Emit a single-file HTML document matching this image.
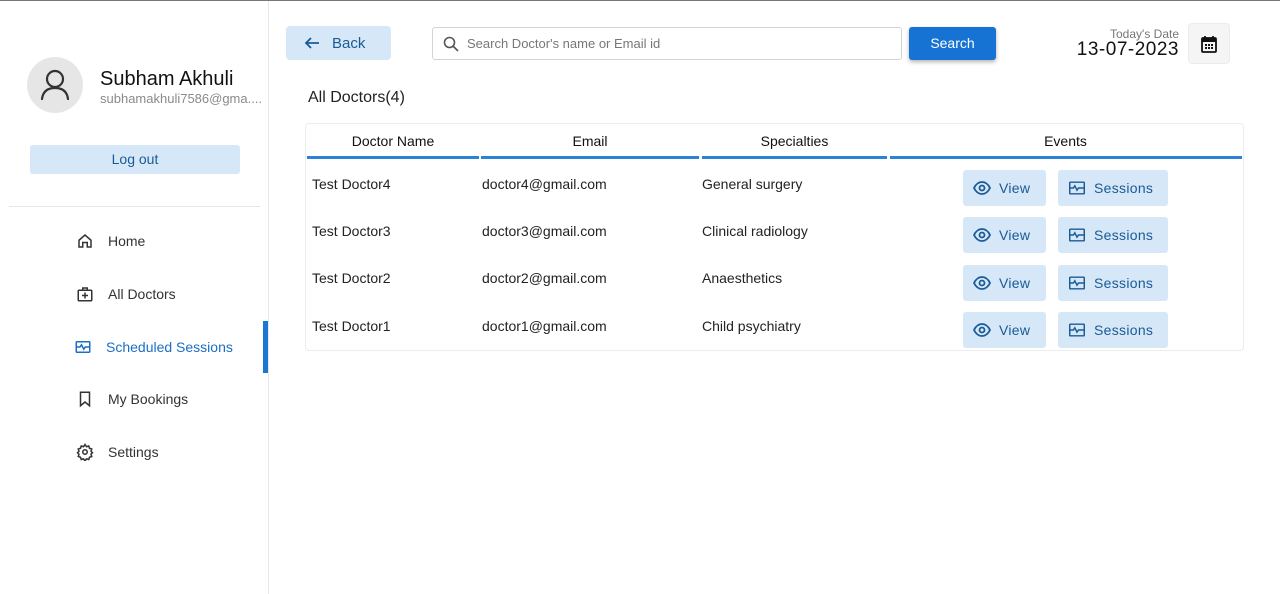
<!DOCTYPE html>
<html><head><meta charset="utf-8"><style>
*{box-sizing:border-box;margin:0;padding:0}
body{width:1280px;height:594px;background:#fff;font-family:"Liberation Sans",sans-serif;position:relative;overflow:hidden;color:#222}
.abs{position:absolute}
.topline{left:0;top:0;width:1280px;height:1px;background:#777}
.side{left:0;top:1px;width:269px;height:593px;border-right:1px solid #e6e6e6}
.avatar{left:27px;top:57px;width:56px;height:56px;border-radius:50%;background:#e6e6e6}
.name{left:100px;top:68px;font-size:20px;color:#111}
.mail{left:100px;top:91px;font-size:13px;color:#8a8a8a}
.logout{left:30px;top:145px;width:210px;height:29px;background:#d6e8f8;border-radius:3px;color:#1a5a96;font-size:14px;text-align:center;line-height:29px}
.hr{left:9px;top:206px;width:251px;height:1px;background:#e6e6e6}
.nav{left:76px;font-size:14px;color:#333;display:flex;align-items:center;gap:14px}
.nav svg{width:18px;height:18px}
.ind{left:263px;top:321px;width:5px;height:52px;background:#1976d2}
.back{left:286px;top:26px;width:105px;height:34px;background:#d6e8f8;border-radius:4px;color:#1a5a96;font-size:15px;display:flex;align-items:center;padding-left:18px;gap:12px}
.search{left:432px;top:27px;width:470px;height:33px;border:1px solid #d4d4d4;border-radius:3px;display:flex;align-items:center;padding-left:10px;gap:8px;font-size:13px;color:#777}
.sbtn{left:909px;top:27px;width:87px;height:33px;background:#1673d4;border-radius:3px;color:#fff;font-size:14px;text-align:center;line-height:33px;box-shadow:0 2px 4px rgba(0,0,0,.3)}
.tdl{left:1060px;top:27px;width:119px;text-align:right;font-size:12px;color:#777}
.tdd{left:1050px;top:39px;width:129px;text-align:right;font-size:19px;color:#111;letter-spacing:.5px}
.cal{left:1188px;top:23px;width:42px;height:41px;background:#f5f5f5;border:1px solid #ececec;border-radius:4px;display:flex;align-items:center;justify-content:center}
.title{left:308px;top:89px;font-size:16px;color:#222}
.table{left:305px;top:123px;width:939px;height:228px;border:1px solid #ececec;border-radius:4px}
.th{top:133px;font-size:14px;color:#111;text-align:center}
.bl{top:156px;height:3px;background:#2c83d6}
.td{font-size:14px;color:#222}
.btn{height:36px;background:#d6e8f8;border-radius:3px;color:#1a5a96;font-size:14px;display:flex;align-items:center;gap:8px;padding-left:10px;letter-spacing:.3px}
</style></head><body>
<div class="abs topline"></div>
<div class="abs side"></div>
<div class="abs avatar"><svg width="56" height="56" viewBox="0 0 56 56"><circle cx="28" cy="22" r="8" fill="none" stroke="#333" stroke-width="2.2"/><path d="M15 42c1-8 6-11 13-11s12 3 13 11" fill="none" stroke="#333" stroke-width="2.2" stroke-linecap="round"/></svg></div>
<div class="abs name">Subham Akhuli</div>
<div class="abs mail">subhamakhuli7586@gma....</div>
<div class="abs logout">Log out</div>
<div class="abs hr"></div>
<div class="abs nav" style="top:232px"><svg viewBox="0 0 24 24" fill="none" stroke="#333" stroke-width="2"><path d="M4 11l8-7 8 7v9h-5v-6h-6v6H4z"/></svg>Home</div>
<div class="abs nav" style="top:285px"><svg viewBox="0 0 24 24" fill="none" stroke="#333" stroke-width="2"><rect x="3" y="7" width="18" height="14" rx="1"/><path d="M9 7V4h6v3M12 10v8M8 14h8"/></svg>All Doctors</div>
<div class="abs nav" style="top:338px;left:74px;color:#1a6fc4"><svg viewBox="0 0 24 24" fill="none" stroke="#1a6fc4" stroke-width="2"><rect x="3" y="5" width="18" height="14" rx="1"/><path d="M3 12h5l2-3 3 6 2-3h6"/></svg>Scheduled Sessions</div>
<div class="abs nav" style="top:390px"><svg viewBox="0 0 24 24" fill="none" stroke="#333" stroke-width="2"><path d="M6 3h12v18l-6-5-6 5z"/></svg>My Bookings</div>
<div class="abs nav" style="top:443px"><svg viewBox="0 0 24 24" fill="none" stroke="#333" stroke-width="2"><circle cx="12" cy="12" r="3"/><path d="M12 2l2 3 3-1 1 3 3 1-1 3 2 2-2 2 1 3-3 1-1 3-3-1-2 3-2-3-3 1-1-3-3-1 1-3-2-2 2-2-1-3 3-1 1-3 3 1z"/></svg>Settings</div>
<div class="abs ind"></div>
<div class="abs back"><svg width="16" height="16" viewBox="0 0 16 16" fill="none" stroke="#1a5a96" stroke-width="1.8"><path d="M15 8H2M7 3L2 8l5 5"/></svg>Back</div>
<div class="abs search"><svg width="16" height="16" viewBox="0 0 16 16" fill="none" stroke="#555" stroke-width="1.6"><circle cx="6.5" cy="6.5" r="5"/><path d="M10 10l5 5"/></svg>Search Doctor's name or Email id</div>
<div class="abs sbtn">Search</div>
<div class="abs tdl">Today's Date</div>
<div class="abs tdd">13-07-2023</div>
<div class="abs cal"><svg width="16" height="18" viewBox="0 0 16 18"><rect x="1" y="3" width="14" height="14" rx="1" fill="none" stroke="#111" stroke-width="1.8"/><rect x="1" y="3" width="14" height="4" fill="#111"/><path d="M4 1v3M12 1v3" stroke="#111" stroke-width="1.8"/><g fill="#111"><rect x="4" y="9" width="2" height="2"/><rect x="7" y="9" width="2" height="2"/><rect x="10" y="9" width="2" height="2"/><rect x="4" y="12" width="2" height="2"/><rect x="7" y="12" width="2" height="2"/><rect x="10" y="12" width="2" height="2"/></g></svg></div>
<div class="abs title">All Doctors(4)</div>
<div class="abs table"></div>
<div class="abs th" style="left:307px;width:172px">Doctor Name</div>
<div class="abs th" style="left:481px;width:218px">Email</div>
<div class="abs th" style="left:702px;width:185px">Specialties</div>
<div class="abs th" style="left:890px;width:351px">Events</div>
<div class="abs bl" style="left:307px;width:172px"></div>
<div class="abs bl" style="left:481px;width:218px"></div>
<div class="abs bl" style="left:702px;width:185px"></div>
<div class="abs bl" style="left:890px;width:352px"></div>

<div class="abs td" style="left:312px;top:176px">Test Doctor4</div><div class="abs td" style="left:482px;top:176px">doctor4@gmail.com</div><div class="abs td" style="left:702px;top:176px">General surgery</div>
<div class="abs td" style="left:312px;top:223px">Test Doctor3</div><div class="abs td" style="left:482px;top:223px">doctor3@gmail.com</div><div class="abs td" style="left:702px;top:223px">Clinical radiology</div>
<div class="abs td" style="left:312px;top:270px">Test Doctor2</div><div class="abs td" style="left:482px;top:270px">doctor2@gmail.com</div><div class="abs td" style="left:702px;top:270px">Anaesthetics</div>
<div class="abs td" style="left:312px;top:318px">Test Doctor1</div><div class="abs td" style="left:482px;top:318px">doctor1@gmail.com</div><div class="abs td" style="left:702px;top:318px">Child psychiatry</div>

<div class="abs btn" style="left:963px;top:170px;width:83px"><svg width="18" height="14" viewBox="0 0 18 14" fill="none" stroke="#1a5a96" stroke-width="1.8"><path d="M1 7c2-4 5-6 8-6s6 2 8 6c-2 4-5 6-8 6S3 11 1 7z"/><circle cx="9" cy="7" r="2.5"/></svg>View</div>
<div class="abs btn" style="left:1058px;top:170px;width:110px"><svg width="18" height="16" viewBox="0 0 24 22" fill="none" stroke="#1a5a96" stroke-width="2"><rect x="2" y="3" width="20" height="16" rx="1"/><path d="M2 11h5l2-3 3 6 2-3h8"/></svg>Sessions</div>
<div class="abs btn" style="left:963px;top:217px;width:83px"><svg width="18" height="14" viewBox="0 0 18 14" fill="none" stroke="#1a5a96" stroke-width="1.8"><path d="M1 7c2-4 5-6 8-6s6 2 8 6c-2 4-5 6-8 6S3 11 1 7z"/><circle cx="9" cy="7" r="2.5"/></svg>View</div>
<div class="abs btn" style="left:1058px;top:217px;width:110px"><svg width="18" height="16" viewBox="0 0 24 22" fill="none" stroke="#1a5a96" stroke-width="2"><rect x="2" y="3" width="20" height="16" rx="1"/><path d="M2 11h5l2-3 3 6 2-3h8"/></svg>Sessions</div>
<div class="abs btn" style="left:963px;top:265px;width:83px"><svg width="18" height="14" viewBox="0 0 18 14" fill="none" stroke="#1a5a96" stroke-width="1.8"><path d="M1 7c2-4 5-6 8-6s6 2 8 6c-2 4-5 6-8 6S3 11 1 7z"/><circle cx="9" cy="7" r="2.5"/></svg>View</div>
<div class="abs btn" style="left:1058px;top:265px;width:110px"><svg width="18" height="16" viewBox="0 0 24 22" fill="none" stroke="#1a5a96" stroke-width="2"><rect x="2" y="3" width="20" height="16" rx="1"/><path d="M2 11h5l2-3 3 6 2-3h8"/></svg>Sessions</div>
<div class="abs btn" style="left:963px;top:312px;width:83px"><svg width="18" height="14" viewBox="0 0 18 14" fill="none" stroke="#1a5a96" stroke-width="1.8"><path d="M1 7c2-4 5-6 8-6s6 2 8 6c-2 4-5 6-8 6S3 11 1 7z"/><circle cx="9" cy="7" r="2.5"/></svg>View</div>
<div class="abs btn" style="left:1058px;top:312px;width:110px"><svg width="18" height="16" viewBox="0 0 24 22" fill="none" stroke="#1a5a96" stroke-width="2"><rect x="2" y="3" width="20" height="16" rx="1"/><path d="M2 11h5l2-3 3 6 2-3h8"/></svg>Sessions</div>
</body></html>
